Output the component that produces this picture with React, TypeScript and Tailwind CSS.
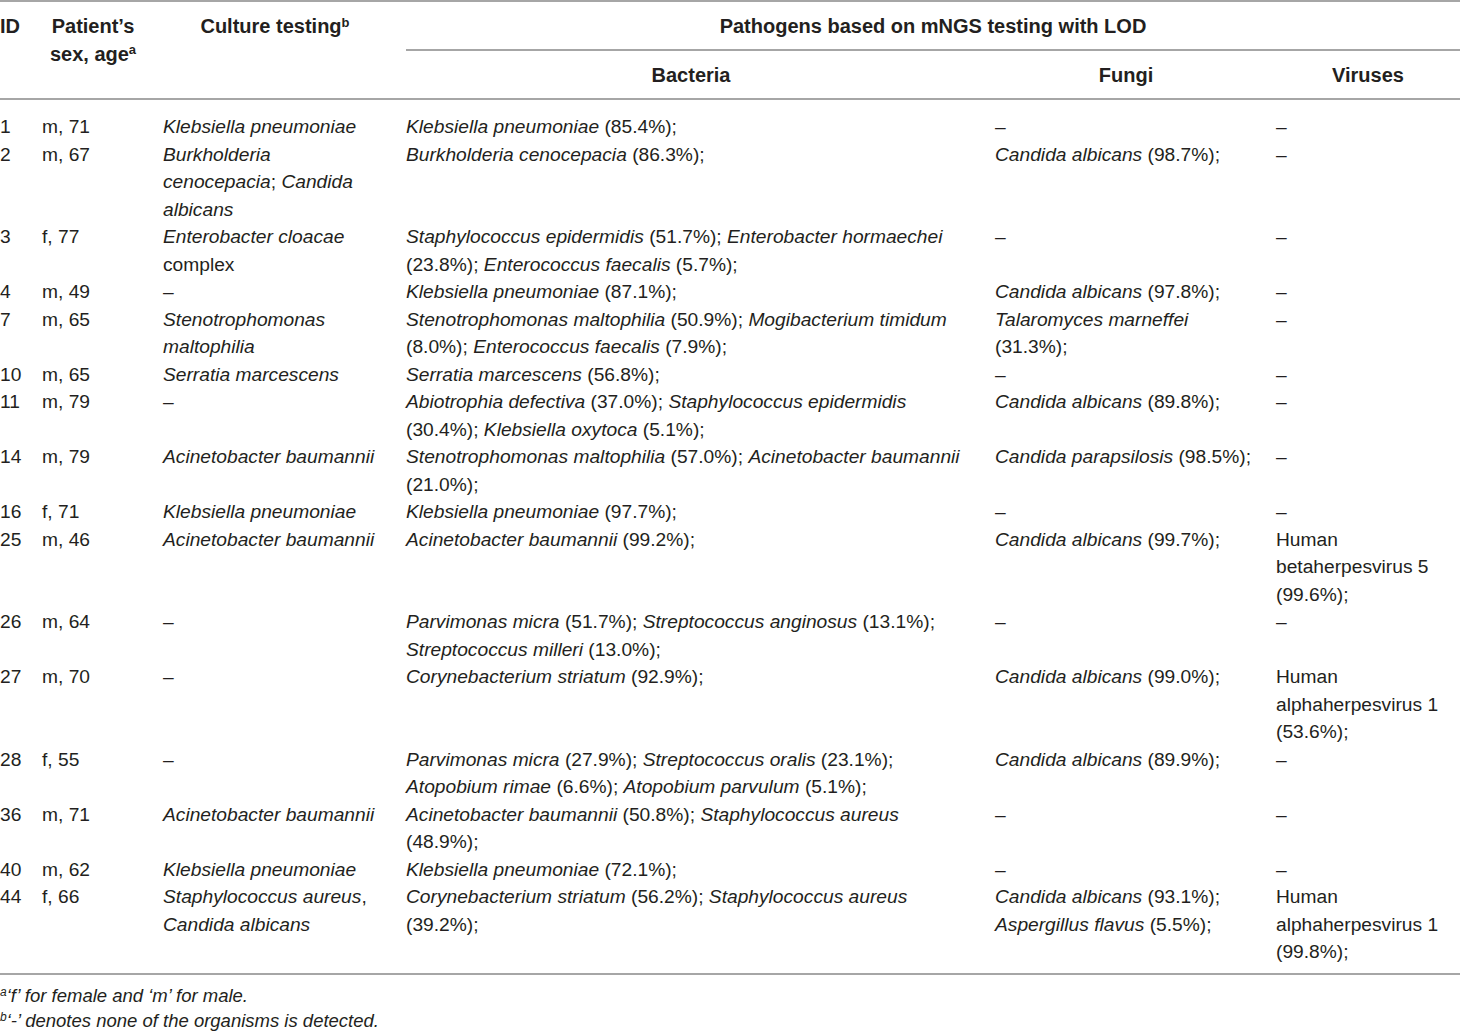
import React from 'react';

const I = ({ children }: { children: React.ReactNode }) => <i>{children}</i>;
const D = '–';

type Row = [string, string, React.ReactNode, React.ReactNode, React.ReactNode, React.ReactNode];

const rows: Row[] = [
  ['1', 'm, 71', <I>Klebsiella pneumoniae</I>, <><I>Klebsiella pneumoniae</I> (85.4%);</>, D, D],
  [
    '2',
    'm, 67',
    <><I>Burkholderia</I><br /><I>cenocepacia</I>; <I>Candida</I><br /><I>albicans</I></>,
    <><I>Burkholderia cenocepacia</I> (86.3%);</>,
    <><I>Candida albicans</I> (98.7%);</>,
    D,
  ],
  [
    '3',
    'f, 77',
    <><I>Enterobacter cloacae</I><br />complex</>,
    <><I>Staphylococcus epidermidis</I> (51.7%); <I>Enterobacter hormaechei</I><br />(23.8%); <I>Enterococcus faecalis</I> (5.7%);</>,
    D,
    D,
  ],
  ['4', 'm, 49', D, <><I>Klebsiella pneumoniae</I> (87.1%);</>, <><I>Candida albicans</I> (97.8%);</>, D],
  [
    '7',
    'm, 65',
    <><I>Stenotrophomonas</I><br /><I>maltophilia</I></>,
    <><I>Stenotrophomonas maltophilia</I> (50.9%); <I>Mogibacterium timidum</I><br />(8.0%); <I>Enterococcus faecalis</I> (7.9%);</>,
    <><I>Talaromyces marneffei</I><br />(31.3%);</>,
    D,
  ],
  ['10', 'm, 65', <I>Serratia marcescens</I>, <><I>Serratia marcescens</I> (56.8%);</>, D, D],
  [
    '11',
    'm, 79',
    D,
    <><I>Abiotrophia defectiva</I> (37.0%); <I>Staphylococcus epidermidis</I><br />(30.4%); <I>Klebsiella oxytoca</I> (5.1%);</>,
    <><I>Candida albicans</I> (89.8%);</>,
    D,
  ],
  [
    '14',
    'm, 79',
    <I>Acinetobacter baumannii</I>,
    <><I>Stenotrophomonas maltophilia</I> (57.0%); <I>Acinetobacter baumannii</I><br />(21.0%);</>,
    <><I>Candida parapsilosis</I> (98.5%);</>,
    D,
  ],
  ['16', 'f, 71', <I>Klebsiella pneumoniae</I>, <><I>Klebsiella pneumoniae</I> (97.7%);</>, D, D],
  [
    '25',
    'm, 46',
    <I>Acinetobacter baumannii</I>,
    <><I>Acinetobacter baumannii</I> (99.2%);</>,
    <><I>Candida albicans</I> (99.7%);</>,
    <>Human<br />betaherpesvirus 5<br />(99.6%);</>,
  ],
  [
    '26',
    'm, 64',
    D,
    <><I>Parvimonas micra</I> (51.7%); <I>Streptococcus anginosus</I> (13.1%);<br /><I>Streptococcus milleri</I> (13.0%);</>,
    D,
    D,
  ],
  [
    '27',
    'm, 70',
    D,
    <><I>Corynebacterium striatum</I> (92.9%);</>,
    <><I>Candida albicans</I> (99.0%);</>,
    <>Human<br />alphaherpesvirus 1<br />(53.6%);</>,
  ],
  [
    '28',
    'f, 55',
    D,
    <><I>Parvimonas micra</I> (27.9%); <I>Streptococcus oralis</I> (23.1%);<br /><I>Atopobium rimae</I> (6.6%); <I>Atopobium parvulum</I> (5.1%);</>,
    <><I>Candida albicans</I> (89.9%);</>,
    D,
  ],
  [
    '36',
    'm, 71',
    <I>Acinetobacter baumannii</I>,
    <><I>Acinetobacter baumannii</I> (50.8%); <I>Staphylococcus aureus</I><br />(48.9%);</>,
    D,
    D,
  ],
  ['40', 'm, 62', <I>Klebsiella pneumoniae</I>, <><I>Klebsiella pneumoniae</I> (72.1%);</>, D, D],
  [
    '44',
    'f, 66',
    <><I>Staphylococcus aureus</I>,<br /><I>Candida albicans</I></>,
    <><I>Corynebacterium striatum</I> (56.2%); <I>Staphylococcus aureus</I><br />(39.2%);</>,
    <><I>Candida albicans</I> (93.1%);<br /><I>Aspergillus flavus</I> (5.5%);</>,
    <>Human<br />alphaherpesvirus 1<br />(99.8%);</>,
  ],
];

export default function App() {
  return (
    <main className="w-[1460px] bg-white text-[#231f20] font-['Liberation_Sans',Arial,sans-serif]">
      <table className="w-full table-fixed border-collapse text-[19.2px] leading-[27.5px]">
        <colgroup>
          <col className="w-[42px]" />
          <col className="w-[121px]" />
          <col className="w-[243px]" />
          <col className="w-[589px]" />
          <col className="w-[281px]" />
          <col className="w-[184px]" />
        </colgroup>
        <thead className="border-t-2 border-b-2 border-[#a6a6a6] font-bold text-[20px]">
          <tr>
            <th rowSpan={2} className="align-top text-left pt-[11px] pr-[19px]">ID</th>
            <th rowSpan={2} className="align-top text-center pt-[11px] pr-[19px]">
              Patient’s<br />sex, age<sup className="text-[13px]">a</sup>
            </th>
            <th rowSpan={2} className="align-top text-center pt-[11px] pr-[19px]">
              Culture testing<sup className="text-[13px]">b</sup>
            </th>
            <th colSpan={3} className="text-center pt-[11px] pb-[8px] border-b-2 border-[#a6a6a6]">
              Pathogens based on mNGS testing with LOD
            </th>
          </tr>
          <tr>
            <th className="text-center pt-[11px] pb-[9px] pr-[19px]">Bacteria</th>
            <th className="text-center pt-[11px] pb-[9px] pr-[19px]">Fungi</th>
            <th className="text-center pt-[11px] pb-[9px]">Viruses</th>
          </tr>
        </thead>
        <tbody className="border-b-2 border-[#a6a6a6]">
          {rows.map((r, i) => {
            const pad = i === 0 ? 'pt-[13px]' : i === rows.length - 1 ? 'pb-[7px]' : '';
            return (
              <tr key={r[0]}>
                {r.map((c, j) => (
                  <td
                    key={j}
                    className={`align-top text-left whitespace-nowrap ${j < 5 ? 'pr-[19px]' : ''} ${pad}`}
                  >
                    {c}
                  </td>
                ))}
              </tr>
            );
          })}
        </tbody>
      </table>
      <div className="pt-[8px] text-[18.5px] leading-[25px] italic">
        <p>
          <sup className="text-[12px]">a</sup>‘f’ for female and ‘m’ for male.
        </p>
        <p>
          <sup className="text-[12px]">b</sup>‘-’ denotes none of the organisms is detected.
        </p>
      </div>
    </main>
  );
}
